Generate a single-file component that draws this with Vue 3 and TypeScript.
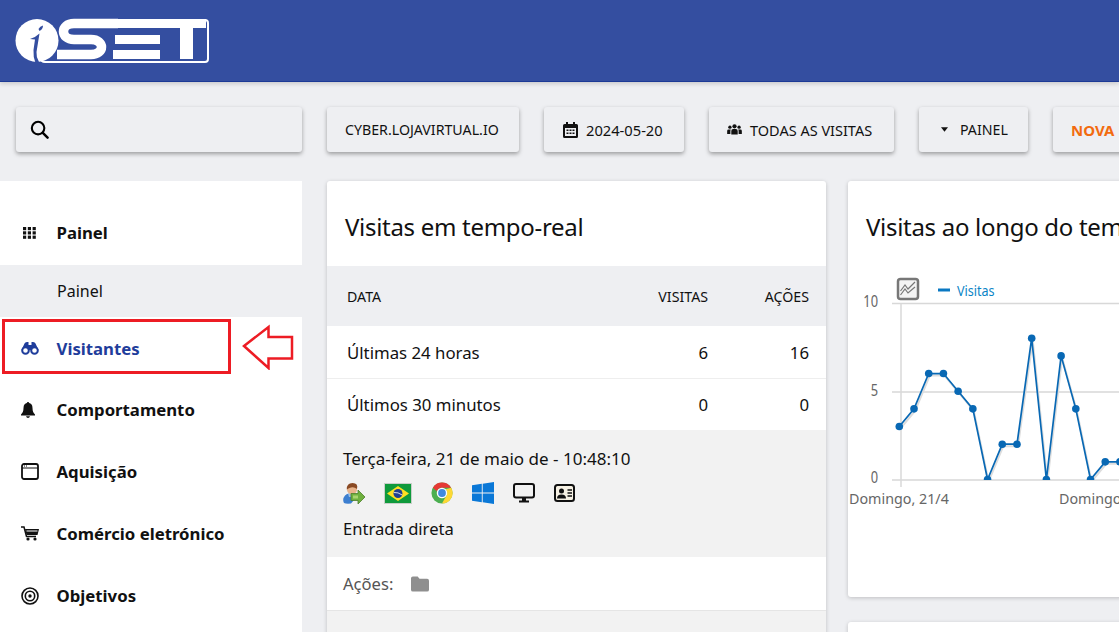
<template>
  <div class="page">
    <header class="topbar">
      <svg class="logo" viewBox="14 16 198 50" width="198" height="50">
        <circle cx="37" cy="40.5" r="21.5" fill="#fff" />
        <path d="M30 39 Q36 37 39.500 33.500 L36.500 52 Q36 57 39 62 L35.500 63 Q33 57 33.500 50 L35 39.500 Z" fill="#344ea0" />
        <path d="M38.500 29 Q40 26 43 25.500 Q43 29 39.500 31 Z" fill="#344ea0" />
        <path d="M41 58 Q41 62 45 62 H205 Q208 62 208 59 V23 Q208 20 205 20 H70" fill="none" stroke="#fff" stroke-width="2" />
        <path d="M118 23.500 H74 C60 23.500 60 39.500 74 39.500 H91 C105 39.500 105 54.500 91 54.500 H57" fill="none" stroke="#344ea0" stroke-width="11.500" />
        <path d="M118 23.500 H74 C60 23.500 60 39.500 74 39.500 H91 C105 39.500 105 54.500 91 54.500 H57" fill="none" stroke="#fff" stroke-width="9.500" />
        <path d="M116 23.500 H162 M115 39.500 H160 M113 54.500 H160 M160 23.500 H206" fill="none" stroke="#fff" stroke-width="9" />
        <rect x="180" y="24" width="13" height="35" fill="#fff" />
      </svg>
    </header>

    <div class="toolbar">
      <div class="search">
        <svg width="19" height="19" viewBox="0 0 20 20" fill="none" stroke="#000" stroke-width="2.2">
          <circle cx="8.500" cy="8.500" r="6.600" />
          <path d="M13.500 13.500 L18.500 18.500" stroke-linecap="round" stroke-width="2.600" />
        </svg>
      </div>
      <button class="tool tool-site">CYBER.LOJAVIRTUAL.IO</button>
      <button class="tool tool-date">
        <svg width="15" height="16" viewBox="0 0 15 16">
          <path d="M3 0h2v2h5V0h2v2h1.500A1.500 1.500 0 0 1 15 3.500v11a1.500 1.500 0 0 1-1.500 1.500h-12A1.500 1.500 0 0 1 0 14.500v-11A1.500 1.500 0 0 1 1.500 2H3z" fill="#111" />
          <path d="M2 6h11v8H2z" fill="#eeeff2" />
          <path d="M3.500 7.500h2v1.500h-2zM6.500 7.500h2v1.500h-2zM9.500 7.500h2v1.500h-2zM3.500 10.500h2v1.500h-2zM6.500 10.500h2v1.500h-2zM9.500 10.500h2v1.500h-2z" fill="#111" />
        </svg>
        2024-05-20
      </button>
      <button class="tool tool-visits">
        <svg width="15" height="11" viewBox="0 0 16 12" fill="#111">
          <circle cx="3" cy="3.500" r="1.800" /><circle cx="8" cy="2.500" r="2.300" /><circle cx="13" cy="3.500" r="1.800" />
          <path d="M0 11V7.500Q0 6 1.500 6H4Q3.500 6.500 3.500 8V11zM4.500 11.500V7.500Q4.500 5.500 6.500 5.500H9.500Q11.500 5.500 11.500 7.500V11.500zM12.500 11V8Q12.500 6.500 12 6H14.500Q16 6 16 7.500V11z" />
        </svg>
        TODAS AS VISITAS
      </button>
      <button class="tool tool-panel">
        <svg width="7" height="5" viewBox="0 0 8 5" fill="#111"><path d="M0 0h8L4 5z" /></svg>
        PAINEL
      </button>
      <button class="tool tool-new">NOVA</button>
    </div>

    <div class="content">
      <aside class="sidebar">
        <a class="nav nav-first">
          <span class="nav-icon">
            <svg width="13" height="12" viewBox="0 0 13 12" fill="#111">
              <template v-for="row in [0, 4.300, 8.600]" :key="row">
                <rect v-for="col in [0, 4.800, 9.600]" :key="col" :x="col" :y="row" width="3.200" height="3.200" />
              </template>
            </svg>
          </span>
          Painel
        </a>
        <a class="sub">Painel</a>
        <a class="nav nav-active">
          <span class="nav-icon">
            <svg width="18" height="13" viewBox="0 0 18 13">
              <path d="M3.500 1.500Q4 0 6 0H7.500V3H10.500V0H12Q14 0 14.500 1.500L17.500 8H0.500Z" fill="#1f3d9b" />
              <circle cx="4.500" cy="8.500" r="3.300" fill="#fff" stroke="#1f3d9b" stroke-width="2" />
              <circle cx="13.500" cy="8.500" r="3.300" fill="#fff" stroke="#1f3d9b" stroke-width="2" />
            </svg>
          </span>
          Visitantes
        </a>
        <a class="nav">
          <span class="nav-icon">
            <svg width="14" height="16" viewBox="0 0 14 16" fill="#111">
              <circle cx="7" cy="1.200" r="1.200" />
              <path d="M7 1Q2.500 1 2.500 6C2.500 9.500 1.500 11 0 12.500V13.500H14V12.500C12.500 11 11.500 9.500 11.500 6Q11.500 1 7 1Z" />
              <path d="M5 14.300H9Q8.500 16 7 16T5 14.300Z" />
            </svg>
          </span>
          Comportamento
        </a>
        <a class="nav">
          <span class="nav-icon">
            <svg width="18" height="17" viewBox="0 0 18 17">
              <rect x="1" y="1" width="16" height="15" rx="2" fill="#fff" stroke="#111" stroke-width="1.800" />
              <path d="M1 5H17" stroke="#111" stroke-width="1" />
              <path d="M3 3H7" stroke="#111" stroke-width="1" stroke-dasharray="1 1" />
            </svg>
          </span>
          Aquisição
        </a>
        <a class="nav">
          <span class="nav-icon">
            <svg width="18" height="15" viewBox="0 0 18 15">
              <path d="M0 1H3L5.500 10.500H15" fill="none" stroke="#111" stroke-width="1.500" />
              <path d="M4 3H18L16.500 9H5.500Z" fill="#111" />
              <path d="M5.500 5H16.500" stroke="#fff" stroke-width="1" />
              <circle cx="7" cy="13" r="1.600" fill="#111" />
              <circle cx="14" cy="13" r="1.600" fill="#111" />
            </svg>
          </span>
          Comércio eletrónico
        </a>
        <a class="nav">
          <span class="nav-icon">
            <svg width="18" height="18" viewBox="0 0 18 18" fill="none" stroke="#111">
              <circle cx="9" cy="9" r="8" stroke-width="1.600" />
              <circle cx="9" cy="9" r="4.700" stroke-width="1.600" />
              <circle cx="9" cy="9" r="1.700" fill="#111" stroke="none" />
            </svg>
          </span>
          Objetivos
        </a>

        <div class="highlight"></div>
        <svg class="callout" width="54" height="46" viewBox="0 0 54 46">
          <path d="M3 22 L27.500 3 V13 H51 V34.500 H27.500 V44 Z" fill="#fff" stroke="#ed1c24" stroke-width="2.500" />
        </svg>
      </aside>

      <section class="card card-live">
        <h2 class="card-title">Visitas em tempo-real</h2>
        <div class="row row-head"><span>DATA</span><span>VISITAS</span><span>AÇÕES</span></div>
        <div v-for="row in rows" :key="row.label" class="row row-body">
          <span>{{ row.label }}</span><span>{{ row.visits }}</span><span>{{ row.actions }}</span>
        </div>
        <div class="visit">
          <div class="visit-date">Terça-feira, 21 de maio de - 10:48:10</div>
          <div class="visit-icons">
            <svg width="22" height="21" viewBox="0 0 22 21">
              <path d="M1 20Q-1 16 2 12.500Q4 10 8 10.500L11 17 8 20.500Q3 21 1 20Z" fill="#3d7fd0" />
              <path d="M5 10.500H11L12 14H6Z" fill="#9bbfe4" />
              <circle cx="9" cy="6.500" r="5" fill="#e8b48c" />
              <path d="M3.800 6.500Q3.500 0 9.500 0T14 6Q11 3.500 8 4.500 6 5 3.800 6.500Z" fill="#8a4a24" />
              <path d="M8 10.500H15V7L22 14 15 21V17.500H8Z" fill="#6fb03e" stroke="#4c7f2a" stroke-width=".8" />
              <path d="M10 12.500H15V15.500H10Z" fill="#a9d46f" />
            </svg>
            <svg width="28" height="21" viewBox="0 0 28 21">
              <rect width="28" height="21" fill="#c9cfc9" />
              <rect x="1" y="1" width="26" height="19" fill="#0f9a3c" />
              <path d="M14 3L25 10.500 14 18 3 10.500Z" fill="#fde022" />
              <circle cx="14" cy="10.500" r="4.500" fill="#1f3f8f" />
              <path d="M9.800 9.500Q14 9 18.200 12" stroke="#fff" stroke-width=".8" fill="none" />
            </svg>
            <svg width="22" height="22" viewBox="0 0 48 48">
              <circle cx="24" cy="24" r="23" fill="#4caf50" />
              <path d="M24 1A23 23 0 0 1 44 12.500H24A11.500 11.500 0 0 0 13 20L4 12.500A23 23 0 0 1 24 1Z" fill="#e53935" />
              <path d="M44 12.500A23 23 0 0 1 24 47L34 29A11.500 11.500 0 0 0 32 16Z" fill="#fdd835" />
              <circle cx="24" cy="24" r="11.500" fill="#fff" />
              <circle cx="24" cy="24" r="8.500" fill="#3f8ae0" />
            </svg>
            <svg width="22" height="22" viewBox="0 0 22 22" fill="#0a78d7">
              <path d="M0 3.200L9.800 1.800V10.500H0ZM10.700 1.700L22 0V10.500H10.700ZM0 11.400H9.800V20.200L0 18.800ZM10.700 11.400H22V22L10.700 20.300Z" />
            </svg>
            <svg width="22" height="20" viewBox="0 0 22 20">
              <rect x="1" y="1" width="20" height="13.500" rx="2" fill="#f2f2f2" stroke="#111" stroke-width="2" />
              <path d="M9 15H13V17.500H16V19.500H6V17.500H9Z" fill="#111" />
            </svg>
            <svg width="21" height="18" viewBox="0 0 21 18">
              <rect x="1" y="1" width="19" height="16" rx="2.500" fill="#f6f1e4" stroke="#111" stroke-width="2" />
              <circle cx="7.500" cy="7" r="2.500" fill="#111" />
              <path d="M3 14.500Q3 10.500 7.500 10.500T12 14.500Z" fill="#111" />
              <path d="M13.500 6H18M13.500 9H18M13.500 12H18" stroke="#111" stroke-width="1.300" />
            </svg>
          </div>
          <div class="visit-source">Entrada direta</div>
        </div>
        <div class="actions">
          <span>Ações:</span>
          <svg width="18" height="16" viewBox="0 0 19 16">
            <path d="M0 2Q0 0 2 0H7L9 2.500H17Q19 2.500 19 4.500V14Q19 16 17 16H2Q0 16 0 14Z" fill="#8f8f8f" />
          </svg>
        </div>
        <div class="card-rest"></div>
      </section>

      <div class="right-col">
        <section class="card card-chart">
          <h2 class="card-title">Visitas ao longo do tempo</h2>
          <svg class="chart" viewBox="848 270 400 240" width="400" height="240">
            <g fill="none" stroke="#d8d8d8" stroke-width="1.500">
              <path d="M892 303.500H1248M892 392H1248M892 480H1248" />
              <path d="M901 303V487" />
            </g>
            <rect x="898" y="279" width="20" height="20" rx="2.500" fill="#f4f4f4" stroke="#777" stroke-width="2.500" />
            <path d="M900.500 291L905 285 908 289 915 282M900.500 295L905 289 908 293 915 287" fill="none" stroke="#777" stroke-width="1.200" />
            <path d="M938 290H950" stroke="#0a78c2" stroke-width="3" />
            <text transform="translate(957 295.500) scale(.82 1)" class="legend">Visitas</text>
            <text transform="translate(878 306.500) scale(.78 1)" text-anchor="end" class="axis">10</text>
            <text transform="translate(878 395.500) scale(.78 1)" text-anchor="end" class="axis">5</text>
            <text transform="translate(878 482.500) scale(.78 1)" text-anchor="end" class="axis">0</text>
            <text x="849" y="504" class="axis-date">Domingo, 21/4</text>
            <text x="1059" y="504" class="axis-date">Domingo</text>
            <g clip-path="url(#plot-clip)">
              <polyline :points="shadowLine" fill="none" stroke="#ddd" stroke-width="2" />
              <polyline :points="line" fill="none" stroke="#0868b4" stroke-width="1.700" />
              <circle v-for="p in points" :key="p.x" :cx="p.x" :cy="p.y" r="3.800" fill="#0868b4" />
            </g>
            <defs>
              <clipPath id="plot-clip"><rect x="848" y="290" width="400" height="190" /></clipPath>
            </defs>
          </svg>
        </section>
        <section class="card card-next"></section>
      </div>
    </div>
  </div>
</template>

<script setup lang="ts">
// visitas por dia, a partir de Domingo 21/4
const values = [3, 4, 6, 6, 5, 4, 0, 2, 2, 8, 0, 7, 4, 0, 1, 1, 3, 2]

const rows = [
  { label: 'Últimas 24 horas', visits: 6, actions: 16 },
  { label: 'Últimos 30 minutos', visits: 0, actions: 0 }
]

const points = values.map((v, i) => ({
  x: 899.3 + i * 14.71,
  y: 479.5 - v * 17.66
}))
const line = points.map((p) => `${p.x},${p.y}`).join(' ')
const shadowLine = points.map((p) => `${p.x + 1},${p.y + 2}`).join(' ')
</script>

<style>
html,
body {
  margin: 0;
  overflow: hidden;
}
</style>

<style scoped>
.page {
  width: 1119px;
  height: 632px;
  overflow: hidden;
  background: #eeeff2;
  font-family: "Noto Sans", "Open Sans", sans-serif;
  color: #111;
}

.topbar {
  height: 65px;
  background: #344ea0;
  border-bottom: 1px solid #1c3a96;
  box-shadow: 0 2px 4px rgba(0, 0, 0, 0.15);
  padding: 16px 14px 0;
}
.logo {
  display: block;
}

.toolbar {
  display: flex;
  gap: 25px;
  padding: 25px 0 29px 16px;
}
.search,
.tool {
  height: 45px;
  box-sizing: border-box;
  background: #eeeff2;
  border: none;
  border-radius: 3px;
  box-shadow: 0 2px 4px rgba(0, 0, 0, 0.35);
  display: flex;
  align-items: center;
  flex: none;
}
.search {
  width: 286px;
  padding-left: 14px;
}
.tool {
  padding: 0 0 0 18px;
  gap: 8px;
  font-family: inherit;
  font-size: 14.2px;
  color: #111;
  white-space: nowrap;
}
.tool-site {
  width: 192px;
}
.tool-date {
  width: 140px;
  padding-left: 19px;
  font-size: 14.700px;
}
.tool-visits {
  width: 185px;
  gap: 8px;
  font-size: 14.500px;
}
.tool-panel {
  width: 109px;
  padding-left: 22px;
  gap: 12px;
}
.tool-new {
  width: 120px;
  color: #f26b0f;
  font-size: 15px;
  font-weight: 700;
}

.content {
  display: flex;
  align-items: flex-start;
}

.sidebar {
  position: relative;
  flex: none;
  width: 302px;
  height: 451px;
  background: #fff;
  margin-right: 25px;
}
.nav {
  display: flex;
  align-items: center;
  height: 62px;
  box-sizing: border-box;
  padding: 0 0 1px 21px;
  font-size: 16.750px;
  font-weight: 700;
  color: #111;
}
.nav-first {
  height: 84px;
  padding-top: 20px;
}
.nav-icon {
  width: 35.500px;
  display: flex;
  align-items: center;
}
.nav-first .nav-icon {
  padding-left: 2px;
  width: 33.500px;
}
.nav-active {
  color: #1f3d9b;
  padding-bottom: 0;
}
.sub {
  display: flex;
  align-items: center;
  height: 52px;
  padding-left: 57px;
  background: #eeeff2;
  font-size: 16px;
  color: #111;
}
.highlight {
  position: absolute;
  left: 2px;
  top: 138px;
  width: 229px;
  height: 55px;
  box-sizing: border-box;
  border: 3px solid #ed1c24;
}
.callout {
  position: absolute;
  left: 241px;
  top: 143px;
}

.card {
  flex: none;
  background: #fff;
  border-radius: 3px;
  box-shadow: 0 1px 4px rgba(0, 0, 0, 0.2);
}
.card-live {
  width: 499px;
  margin-right: 22px;
}
.card-title {
  margin: 0;
  height: 85px;
  box-sizing: border-box;
  padding: 28px 0 0 18px;
  font-size: 24px;
  line-height: 36px;
  letter-spacing: -0.3px;
  font-weight: 400;
  color: #111;
  white-space: nowrap;
}
.row {
  display: grid;
  grid-template-columns: 1fr 100px 101px;
  align-items: center;
  padding: 0 17px 0 20px;
  font-size: 16.800px;
}
.row span + span {
  text-align: right;
}
.row-head {
  height: 60px;
  background: #eeeff2;
  font-size: 14.200px;
}
.row-body {
  height: 52px;
  box-sizing: border-box;
}
.row-body + .row-body {
  border-top: 1px solid #eee;
}

.visit {
  height: 127px;
  box-sizing: border-box;
  background: #f2f2f2;
  padding: 17px 0 0 16px;
  font-size: 17px;
}
.visit-date,
.visit-source {
  line-height: 24px;
}
.visit-source {
  font-size: 16.600px;
}
.visit-icons {
  display: flex;
  align-items: center;
  gap: 19px;
  height: 24px;
  margin: 10px 0 12px;
}
.actions {
  display: flex;
  align-items: center;
  gap: 18px;
  height: 54px;
  box-sizing: border-box;
  padding-left: 16px;
  border-bottom: 1px solid #e5e5e5;
  font-size: 16.600px;
  color: #555;
}
.card-rest {
  height: 60px;
  background: #f2f2f2;
}

.right-col {
  flex: none;
  width: 500px;
  display: flex;
  flex-direction: column;
  gap: 25px;
}
.card-chart {
  height: 416px;
}
.card-chart .card-title {
  height: 89px;
}
.chart {
  display: block;
}
.card-next {
  height: 200px;
}

.legend {
  font-size: 15.300px;
  fill: #0a84c6;
}
.axis {
  font-size: 16.500px;
  fill: #666;
}
.axis-date {
  font-size: 14.300px;
  fill: #666;
}
</style>
